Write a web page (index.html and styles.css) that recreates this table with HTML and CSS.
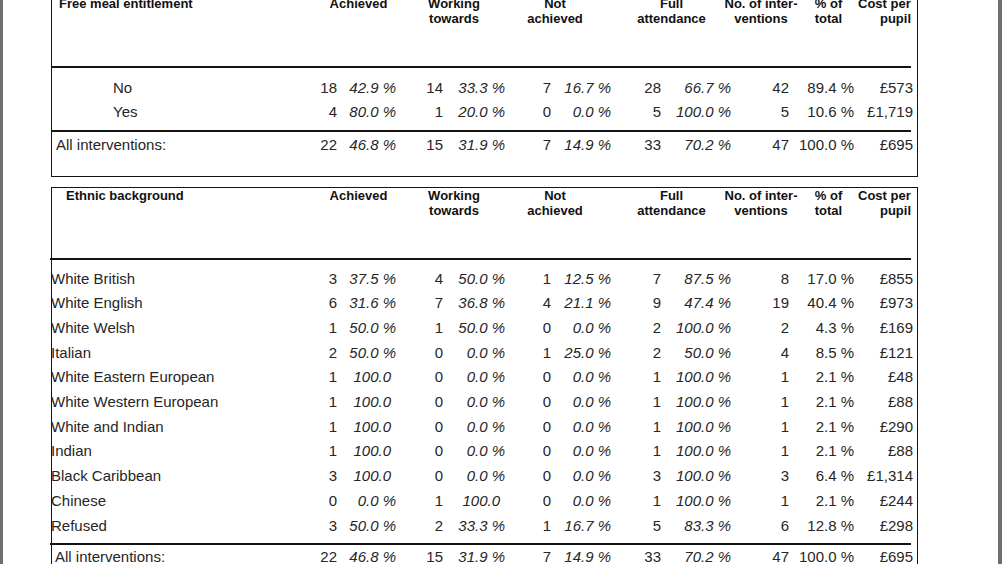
FILE: index.html
```html
<!DOCTYPE html>
<html>
<head>
<meta charset="utf-8">
<link rel="stylesheet" href="styles.css">
</head>
<body>
<div class="page">
  <section class="tbl t1">
    <div class="head">
      <div class="hc hl">Free meal entitlement</div>
      <div class="hc"><span>Achieved</span></div>
      <div class="hc"><span>Working</span><span>towards</span></div>
      <div class="hc"><span>Not</span><span>achieved</span></div>
      <div class="hc hfull"><span>Full</span><span>attendance</span></div>
      <div class="hc"><span>No. of inter-</span><span>ventions</span></div>
      <div class="hc"><span>% of</span><span>total</span></div>
      <div class="hc hcost"><span class="l1">Cost per</span><span>pupil</span></div>
    </div>
    <div class="rule"></div>
    <div class="body">
      <div class="row"><span class="lbl ind">No</span><span>18</span><span class="i">42.9 %</span><span>14</span><span class="i">33.3 %</span><span>7</span><span class="i">16.7 %</span><span>28</span><span class="i">66.7 %</span><span>42</span><span>89.4 %</span><span>£573</span></div>
      <div class="row"><span class="lbl ind">Yes</span><span>4</span><span class="i">80.0 %</span><span>1</span><span class="i">20.0 %</span><span>0</span><span class="i">0.0 %</span><span>5</span><span class="i">100.0 %</span><span>5</span><span>10.6 %</span><span>£1,719</span></div>
    </div>
    <div class="rule"></div>
    <div class="total">
      <div class="row"><span class="lbl tl">All interventions:</span><span>22</span><span class="i">46.8 %</span><span>15</span><span class="i">31.9 %</span><span>7</span><span class="i">14.9 %</span><span>33</span><span class="i">70.2 %</span><span>47</span><span>100.0 %</span><span>£695</span></div>
    </div>
  </section>

  <section class="tbl t2">
    <div class="head">
      <div class="hc hl">Ethnic background</div>
      <div class="hc"><span>Achieved</span></div>
      <div class="hc"><span>Working</span><span>towards</span></div>
      <div class="hc"><span>Not</span><span>achieved</span></div>
      <div class="hc hfull"><span>Full</span><span>attendance</span></div>
      <div class="hc"><span>No. of inter-</span><span>ventions</span></div>
      <div class="hc"><span>% of</span><span>total</span></div>
      <div class="hc hcost"><span class="l1">Cost per</span><span>pupil</span></div>
    </div>
    <div class="rule"></div>
    <div class="body">
      <div class="row"><span class="lbl">White British</span><span>3</span><span class="i">37.5 %</span><span>4</span><span class="i">50.0 %</span><span>1</span><span class="i">12.5 %</span><span>7</span><span class="i">87.5 %</span><span>8</span><span>17.0 %</span><span>£855</span></div>
      <div class="row"><span class="lbl">White English</span><span>6</span><span class="i">31.6 %</span><span>7</span><span class="i">36.8 %</span><span>4</span><span class="i">21.1 %</span><span>9</span><span class="i">47.4 %</span><span>19</span><span>40.4 %</span><span>£973</span></div>
      <div class="row"><span class="lbl">White Welsh</span><span>1</span><span class="i">50.0 %</span><span>1</span><span class="i">50.0 %</span><span>0</span><span class="i">0.0 %</span><span>2</span><span class="i">100.0 %</span><span>2</span><span>4.3 %</span><span>£169</span></div>
      <div class="row"><span class="lbl">Italian</span><span>2</span><span class="i">50.0 %</span><span>0</span><span class="i">0.0 %</span><span>1</span><span class="i">25.0 %</span><span>2</span><span class="i">50.0 %</span><span>4</span><span>8.5 %</span><span>£121</span></div>
      <div class="row"><span class="lbl">White Eastern European</span><span>1</span><span class="i cut">100.0</span><span>0</span><span class="i">0.0 %</span><span>0</span><span class="i">0.0 %</span><span>1</span><span class="i">100.0 %</span><span>1</span><span>2.1 %</span><span>£48</span></div>
      <div class="row"><span class="lbl">White Western European</span><span>1</span><span class="i cut">100.0</span><span>0</span><span class="i">0.0 %</span><span>0</span><span class="i">0.0 %</span><span>1</span><span class="i">100.0 %</span><span>1</span><span>2.1 %</span><span>£88</span></div>
      <div class="row"><span class="lbl">White and Indian</span><span>1</span><span class="i cut">100.0</span><span>0</span><span class="i">0.0 %</span><span>0</span><span class="i">0.0 %</span><span>1</span><span class="i">100.0 %</span><span>1</span><span>2.1 %</span><span>£290</span></div>
      <div class="row"><span class="lbl">Indian</span><span>1</span><span class="i cut">100.0</span><span>0</span><span class="i">0.0 %</span><span>0</span><span class="i">0.0 %</span><span>1</span><span class="i">100.0 %</span><span>1</span><span>2.1 %</span><span>£88</span></div>
      <div class="row"><span class="lbl">Black Caribbean</span><span>3</span><span class="i cut">100.0</span><span>0</span><span class="i">0.0 %</span><span>0</span><span class="i">0.0 %</span><span>3</span><span class="i">100.0 %</span><span>3</span><span>6.4 %</span><span>£1,314</span></div>
      <div class="row"><span class="lbl">Chinese</span><span>0</span><span class="i">0.0 %</span><span>1</span><span class="i cut">100.0</span><span>0</span><span class="i">0.0 %</span><span>1</span><span class="i">100.0 %</span><span>1</span><span>2.1 %</span><span>£244</span></div>
      <div class="row"><span class="lbl">Refused</span><span>3</span><span class="i">50.0 %</span><span>2</span><span class="i">33.3 %</span><span>1</span><span class="i">16.7 %</span><span>5</span><span class="i">83.3 %</span><span>6</span><span>12.8 %</span><span>£298</span></div>
    </div>
    <div class="rule"></div>
    <div class="total">
      <div class="row"><span class="lbl tl">All interventions:</span><span>22</span><span class="i">46.8 %</span><span>15</span><span class="i">31.9 %</span><span>7</span><span class="i">14.9 %</span><span>33</span><span class="i">70.2 %</span><span>47</span><span>100.0 %</span><span>£695</span></div>
    </div>
  </section>
</div>
</body>
</html>
```

FILE: styles.css
```css
* { box-sizing: border-box; }
html, body { margin: 0; padding: 0; height: 100%; }
body {
  background: #6f6f6f;
  font-family: "Liberation Sans", Arial, sans-serif;
  color: #262626;
  overflow: hidden;
}
.page {
  background: #ffffff;
  margin: 0 4px 0 3px;
  height: 564px;
  overflow: hidden;
}
.tbl {
  width: 867px;
  margin-left: 48px;
  border: 1px solid #141414;
}
.t1 { margin-top: -5px; }
.t2 { margin-top: 10px; }

.head {
  height: 70px;
  display: grid;
  grid-template-columns: 258px 97px 94px 108px 114px 76px 59px 59px;
  font-weight: bold;
  font-size: 13px;
  line-height: 15px;
  color: #111;
  white-space: nowrap;
}
.hc { text-align: center; }
.hc span { display: block; }
.hl { text-align: left; padding-left: 7px; }
.t2 .hl { padding-left: 14px; }
.hfull { padding-left: 11px; }
.hcost { text-align: right; padding-right: 6px; }
.hcost .l1 { padding-right: 4px; }

.rule {
  height: 2px;
  background: #141414;
  margin-right: 6px;
}
.t2 .rule { margin-left: -2px; }

.row {
  display: grid;
  grid-template-columns: 248px 37px 59px 47px 62px 46px 60px 50px 70px 58px 65px 59px;
  padding-right: 4px;
  font-size: 15px;
  white-space: nowrap;
}
.row > span { text-align: right; }
.row > .lbl { text-align: left; }
.row > .cut { padding-right: 5px; }
.i { font-style: italic; }

.t1 .row { line-height: 23.5px; }
.t1 .body { padding: 8px 0 7px; }
.t1 .total { padding: 1px 0 19.5px; }
.ind { padding-left: 61px; }
.tl { padding-left: 4px; }

.t2 .row { line-height: 24.7px; }
.t2 .body { padding: 6.5px 0 5px; }
.t2 .lbl { margin-left: -1px; }
.t2 .tl { margin-left: 0; padding-left: 3px; }
```
